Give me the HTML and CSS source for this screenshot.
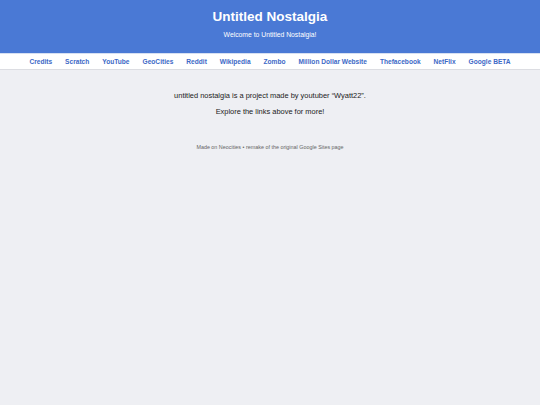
FILE: index.html
```html
<!DOCTYPE html>
<html>
<head>
<meta charset="utf-8">
<title>Untitled Nostalgia</title>
<link rel="stylesheet" href="styles.css">
</head>
<body>
<header class="site-header">
  <h1 class="title">Untitled Nostalgia</h1>
  <p class="subtitle">Welcome to Untitled Nostalgia!</p>
</header>
<nav class="nav">
  <a href="#">Credits</a>
  <a href="#">Scratch</a>
  <a href="#">YouTube</a>
  <a href="#">GeoCities</a>
  <a href="#">Reddit</a>
  <a href="#">Wikipedia</a>
  <a href="#">Zombo</a>
  <a href="#">Million Dollar Website</a>
  <a href="#">Thefacebook</a>
  <a href="#">NetFlix</a>
  <a href="#">Google BETA</a>
</nav>
<main class="content">
  <p class="line">untitled nostalgia is a project made by youtuber “Wyatt22”.</p>
  <p class="line">Explore the links above for more!</p>
  <p class="footer">Made on Neocities • remake of the original Google Sites page</p>
</main>
</body>
</html>
```

FILE: styles.css
```css
html, body {
  margin: 0;
  padding: 0;
}
body {
  background: #eeeff3;
  font-family: "Liberation Sans", Arial, sans-serif;
  color: #222;
  height: 405px;
}
.site-header {
  background: #4a79d5;
  color: #fff;
  text-align: center;
  height: 53px;
  box-sizing: border-box;
  padding-top: 8px;
}
.title {
  margin: 0;
  font-size: 13.5px;
  font-weight: bold;
  line-height: 18px;
}
.subtitle {
  margin: 0;
  margin-top: 4px;
  font-size: 6.8px;
  line-height: 10px;
}
.nav {
  background: #fff;
  border-top: 1px solid #d6e0f2;
  border-bottom: 1px solid #dcdde2;
  height: 15px;
  display: flex;
  justify-content: center;
  align-items: center;
  gap: 13px;
}
.nav a {
  color: #3c68c6;
  font-weight: bold;
  font-size: 6.6px;
  text-decoration: none;
}
.content {
  text-align: center;
  padding-top: 22px;
}
.line {
  margin: 0 0 8px 0;
  font-size: 7.45px;
  line-height: 8px;
  color: #222;
}
.footer {
  margin: 28px 0 0 0;
  font-size: 5.4px;
  color: #666;
}
```
